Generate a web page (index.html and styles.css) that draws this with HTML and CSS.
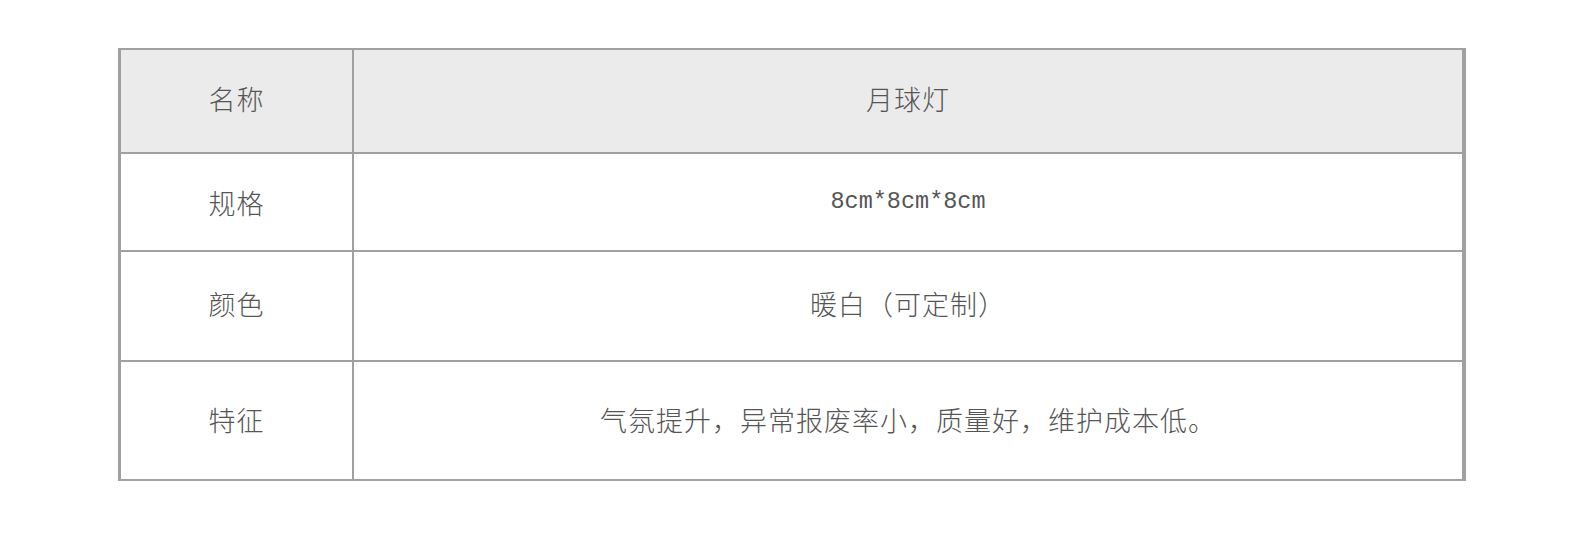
FILE: index.html
```html
<!DOCTYPE html>
<html lang="zh">
<head>
<meta charset="utf-8">
<link rel="stylesheet" href="styles.css">
</head>
<body>
<table class="spec">
  <tr class="head">
    <td class="c1">名称</td>
    <td class="c2">月球灯</td>
  </tr>
  <tr class="r2">
    <td class="c1">规格</td>
    <td class="c2 latin">8cm*8cm*8cm</td>
  </tr>
  <tr class="r3">
    <td class="c1">颜色</td>
    <td class="c2">暖白（可定制）</td>
  </tr>
  <tr class="r4 last">
    <td class="c1">特征</td>
    <td class="c2">气氛提升，异常报废率小，质量好，维护成本低。</td>
  </tr>
</table>
</body>
</html>
```
FILE: styles.css
```css
html, body {
  margin: 0;
  padding: 0;
  background: #ffffff;
}
body {
  padding: 48px 0 0 118px;
  font-family: "Noto Sans CJK SC", sans-serif;
}
.spec {
  border-collapse: separate;
  border-spacing: 0;
  border-top: 2px solid #a0a0a0;
  border-left: 3px solid #a0a0a0;
  border-right: 4px solid #a0a0a0;
  border-bottom: 2px solid #a0a0a0;
  color: #555555;
  font-size: 27px;
  line-height: 1;
  letter-spacing: 1px;
  font-weight: 300;
}
.spec td {
  padding: 0;
  text-align: center;
  vertical-align: middle;
  border-bottom: 2px solid #a0a0a0;
}
.spec tr.last td {
  border-bottom: none;
}
.spec .c1 {
  width: 231px;
  border-right: 2px solid #a0a0a0;
}
.spec .c2 {
  width: 1108px;
}
.spec .head td {
  background: #ebebeb;
  height: 97px;
  padding-bottom: 5px;
}
.spec .r2 td { height: 96px; }
.spec .r3 td { height: 103px; padding-bottom: 5px; }
.spec .r4 td { height: 114px; padding-bottom: 3px; }
.latin {
  font-family: "Liberation Mono", monospace;
  font-size: 23.5px;
  letter-spacing: 0;
}
```
